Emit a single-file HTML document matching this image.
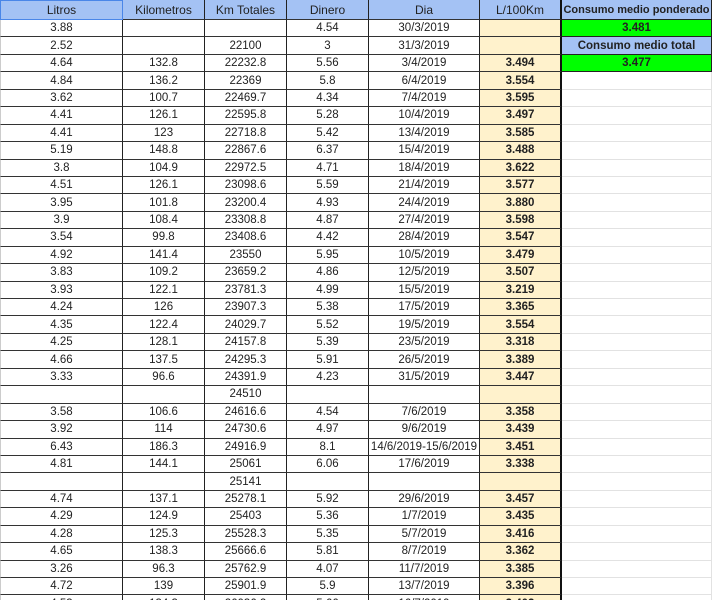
<!DOCTYPE html>
<html><head><meta charset="utf-8"><style>
*{box-sizing:border-box;margin:0;padding:0}
html,body{width:712px;height:600px;overflow:hidden}
body{background:#fff;font-family:"Liberation Sans",Arial,sans-serif;font-size:11.5px;color:#222;position:relative}
.r{display:flex;height:17.45px}
.h{height:20px}
.c{height:100%;border-right:1px solid #222;border-bottom:1px solid #333;display:flex;align-items:center;justify-content:center;white-space:nowrap;overflow:hidden}
.c1{width:123px;border-left:1px solid #ccc}.c2,.c3,.c4{width:82px}.c5{width:111px}
.c6{width:82px;background:#fff2cc;font-weight:bold;border-right:2px solid #111}
.c7{width:150px;border-right:1px solid #e2e2e2;border-bottom:1px solid #e2e2e2}
.h .c{background:#a4c2f4;font-size:12px}
.h .c1{border:1px solid #4a86e8}
.b{background:#a4c2f4!important;font-weight:bold;border-right:1px solid #222!important;border-bottom:1px solid #222!important}
.g{background:#00ff00!important;font-weight:bold;border-right:1px solid #222!important;border-bottom:1px solid #222!important}
</style></head><body>
<div class="r h"><div class="c c1">Litros</div><div class="c c2">Kilometros</div><div class="c c3">Km Totales</div><div class="c c4">Dinero</div><div class="c c5">Dia</div><div class="c c6" style="background:#a4c2f4;font-weight:normal">L/100Km</div><div class="c c7 b" style="font-size:11px">Consumo medio ponderado</div></div>
<div class="r"><div class="c c1">3.88</div><div class="c c2"></div><div class="c c3"></div><div class="c c4">4.54</div><div class="c c5">30/3/2019</div><div class="c c6"></div><div class="c c7 g">3.481</div></div>
<div class="r"><div class="c c1">2.52</div><div class="c c2"></div><div class="c c3">22100</div><div class="c c4">3</div><div class="c c5">31/3/2019</div><div class="c c6"></div><div class="c c7 b">Consumo medio total</div></div>
<div class="r"><div class="c c1">4.64</div><div class="c c2">132.8</div><div class="c c3">22232.8</div><div class="c c4">5.56</div><div class="c c5">3/4/2019</div><div class="c c6">3.494</div><div class="c c7 g">3.477</div></div>
<div class="r"><div class="c c1">4.84</div><div class="c c2">136.2</div><div class="c c3">22369</div><div class="c c4">5.8</div><div class="c c5">6/4/2019</div><div class="c c6">3.554</div><div class="c c7"></div></div>
<div class="r"><div class="c c1">3.62</div><div class="c c2">100.7</div><div class="c c3">22469.7</div><div class="c c4">4.34</div><div class="c c5">7/4/2019</div><div class="c c6">3.595</div><div class="c c7"></div></div>
<div class="r"><div class="c c1">4.41</div><div class="c c2">126.1</div><div class="c c3">22595.8</div><div class="c c4">5.28</div><div class="c c5">10/4/2019</div><div class="c c6">3.497</div><div class="c c7"></div></div>
<div class="r"><div class="c c1">4.41</div><div class="c c2">123</div><div class="c c3">22718.8</div><div class="c c4">5.42</div><div class="c c5">13/4/2019</div><div class="c c6">3.585</div><div class="c c7"></div></div>
<div class="r"><div class="c c1">5.19</div><div class="c c2">148.8</div><div class="c c3">22867.6</div><div class="c c4">6.37</div><div class="c c5">15/4/2019</div><div class="c c6">3.488</div><div class="c c7"></div></div>
<div class="r"><div class="c c1">3.8</div><div class="c c2">104.9</div><div class="c c3">22972.5</div><div class="c c4">4.71</div><div class="c c5">18/4/2019</div><div class="c c6">3.622</div><div class="c c7"></div></div>
<div class="r"><div class="c c1">4.51</div><div class="c c2">126.1</div><div class="c c3">23098.6</div><div class="c c4">5.59</div><div class="c c5">21/4/2019</div><div class="c c6">3.577</div><div class="c c7"></div></div>
<div class="r"><div class="c c1">3.95</div><div class="c c2">101.8</div><div class="c c3">23200.4</div><div class="c c4">4.93</div><div class="c c5">24/4/2019</div><div class="c c6">3.880</div><div class="c c7"></div></div>
<div class="r"><div class="c c1">3.9</div><div class="c c2">108.4</div><div class="c c3">23308.8</div><div class="c c4">4.87</div><div class="c c5">27/4/2019</div><div class="c c6">3.598</div><div class="c c7"></div></div>
<div class="r"><div class="c c1">3.54</div><div class="c c2">99.8</div><div class="c c3">23408.6</div><div class="c c4">4.42</div><div class="c c5">28/4/2019</div><div class="c c6">3.547</div><div class="c c7"></div></div>
<div class="r"><div class="c c1">4.92</div><div class="c c2">141.4</div><div class="c c3">23550</div><div class="c c4">5.95</div><div class="c c5">10/5/2019</div><div class="c c6">3.479</div><div class="c c7"></div></div>
<div class="r"><div class="c c1">3.83</div><div class="c c2">109.2</div><div class="c c3">23659.2</div><div class="c c4">4.86</div><div class="c c5">12/5/2019</div><div class="c c6">3.507</div><div class="c c7"></div></div>
<div class="r"><div class="c c1">3.93</div><div class="c c2">122.1</div><div class="c c3">23781.3</div><div class="c c4">4.99</div><div class="c c5">15/5/2019</div><div class="c c6">3.219</div><div class="c c7"></div></div>
<div class="r"><div class="c c1">4.24</div><div class="c c2">126</div><div class="c c3">23907.3</div><div class="c c4">5.38</div><div class="c c5">17/5/2019</div><div class="c c6">3.365</div><div class="c c7"></div></div>
<div class="r"><div class="c c1">4.35</div><div class="c c2">122.4</div><div class="c c3">24029.7</div><div class="c c4">5.52</div><div class="c c5">19/5/2019</div><div class="c c6">3.554</div><div class="c c7"></div></div>
<div class="r"><div class="c c1">4.25</div><div class="c c2">128.1</div><div class="c c3">24157.8</div><div class="c c4">5.39</div><div class="c c5">23/5/2019</div><div class="c c6">3.318</div><div class="c c7"></div></div>
<div class="r"><div class="c c1">4.66</div><div class="c c2">137.5</div><div class="c c3">24295.3</div><div class="c c4">5.91</div><div class="c c5">26/5/2019</div><div class="c c6">3.389</div><div class="c c7"></div></div>
<div class="r"><div class="c c1">3.33</div><div class="c c2">96.6</div><div class="c c3">24391.9</div><div class="c c4">4.23</div><div class="c c5">31/5/2019</div><div class="c c6">3.447</div><div class="c c7"></div></div>
<div class="r"><div class="c c1"></div><div class="c c2"></div><div class="c c3">24510</div><div class="c c4"></div><div class="c c5"></div><div class="c c6"></div><div class="c c7"></div></div>
<div class="r"><div class="c c1">3.58</div><div class="c c2">106.6</div><div class="c c3">24616.6</div><div class="c c4">4.54</div><div class="c c5">7/6/2019</div><div class="c c6">3.358</div><div class="c c7"></div></div>
<div class="r"><div class="c c1">3.92</div><div class="c c2">114</div><div class="c c3">24730.6</div><div class="c c4">4.97</div><div class="c c5">9/6/2019</div><div class="c c6">3.439</div><div class="c c7"></div></div>
<div class="r"><div class="c c1">6.43</div><div class="c c2">186.3</div><div class="c c3">24916.9</div><div class="c c4">8.1</div><div class="c c5">14/6/2019-15/6/2019</div><div class="c c6">3.451</div><div class="c c7"></div></div>
<div class="r"><div class="c c1">4.81</div><div class="c c2">144.1</div><div class="c c3">25061</div><div class="c c4">6.06</div><div class="c c5">17/6/2019</div><div class="c c6">3.338</div><div class="c c7"></div></div>
<div class="r"><div class="c c1"></div><div class="c c2"></div><div class="c c3">25141</div><div class="c c4"></div><div class="c c5"></div><div class="c c6"></div><div class="c c7"></div></div>
<div class="r"><div class="c c1">4.74</div><div class="c c2">137.1</div><div class="c c3">25278.1</div><div class="c c4">5.92</div><div class="c c5">29/6/2019</div><div class="c c6">3.457</div><div class="c c7"></div></div>
<div class="r"><div class="c c1">4.29</div><div class="c c2">124.9</div><div class="c c3">25403</div><div class="c c4">5.36</div><div class="c c5">1/7/2019</div><div class="c c6">3.435</div><div class="c c7"></div></div>
<div class="r"><div class="c c1">4.28</div><div class="c c2">125.3</div><div class="c c3">25528.3</div><div class="c c4">5.35</div><div class="c c5">5/7/2019</div><div class="c c6">3.416</div><div class="c c7"></div></div>
<div class="r"><div class="c c1">4.65</div><div class="c c2">138.3</div><div class="c c3">25666.6</div><div class="c c4">5.81</div><div class="c c5">8/7/2019</div><div class="c c6">3.362</div><div class="c c7"></div></div>
<div class="r"><div class="c c1">3.26</div><div class="c c2">96.3</div><div class="c c3">25762.9</div><div class="c c4">4.07</div><div class="c c5">11/7/2019</div><div class="c c6">3.385</div><div class="c c7"></div></div>
<div class="r"><div class="c c1">4.72</div><div class="c c2">139</div><div class="c c3">25901.9</div><div class="c c4">5.9</div><div class="c c5">13/7/2019</div><div class="c c6">3.396</div><div class="c c7"></div></div>
<div class="r"><div class="c c1">4.53</div><div class="c c2">134.3</div><div class="c c3">26036.2</div><div class="c c4">5.66</div><div class="c c5">16/7/2019</div><div class="c c6">3.402</div><div class="c c7"></div></div>
</body></html>
